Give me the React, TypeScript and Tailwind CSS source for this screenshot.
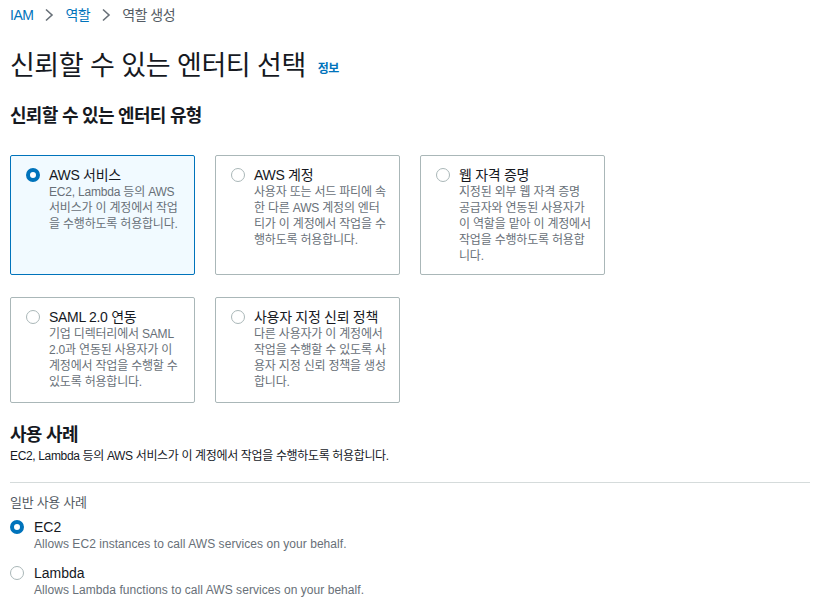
import React from "react";

const FONT = { fontFamily: '"Liberation Sans", "Noto Sans CJK KR", sans-serif' };

function Radio({ checked }: { checked?: boolean }) {
  return checked ? (
    <span className="block w-[14px] h-[14px] rounded-full border-[4px] border-[#0073bb] bg-white shrink-0" />
  ) : (
    <span className="block w-[14px] h-[14px] rounded-full border border-[#aab7b8] bg-white shrink-0" />
  );
}

type CardProps = { title: string; lines: string[]; checked?: boolean };

function Card({ title, lines, checked }: CardProps) {
  return (
    <div
      className={
        "rounded-[2px] border pt-[10px] pl-[15px] pr-[10px] flex gap-[9px] " +
        (checked ? "border-[#0073bb] bg-[#f1faff]" : "border-[#aab7b8] bg-white")
      }
    >
      <div className="h-[18px] flex items-center">
        <Radio checked={checked} />
      </div>
      <div className="flex flex-col">
        <div className="text-[14px] leading-[18px] text-[#16191f] whitespace-nowrap tracking-[-0.3px]">{title}</div>
        {lines.map((l, i) => (
          <div key={i} className="text-[12px] leading-[16px] text-[#687078] whitespace-nowrap tracking-[-0.2px]">
            {l}
          </div>
        ))}
      </div>
    </div>
  );
}

function Chevron() {
  return (
    <svg width="10" height="14" viewBox="0 0 10 14" className="mx-[11px]">
      <path d="M2 1.5 L8 7 L2 12.5" fill="none" stroke="#687078" strokeWidth="1.6" />
    </svg>
  );
}

export default function App() {
  return (
    <div className="w-[818px] h-[605px] overflow-hidden bg-white pl-[10px]" style={FONT}>
      <div className="h-[30px] flex items-center text-[14px] tracking-[-0.5px]">
        <span className="text-[#0073bb]">IAM</span>
        <Chevron />
        <span className="text-[#0073bb]">역할</span>
        <Chevron />
        <span className="text-[#545b64]">역할 생성</span>
      </div>

      <div className="mt-[16px] h-[40px] flex items-center">
        <h1 className="text-[27px] leading-[40px] text-[#16191f] tracking-[-0.5px]">신뢰할 수 있는 엔터티 선택</h1>
        <span className="ml-[12px] mt-[6px] text-[12px] font-bold text-[#0073bb] tracking-[-0.5px]">정보</span>
      </div>

      <h2 className="mt-[18px] text-[18px] leading-[24px] font-bold text-[#16191f] tracking-[-0.7px]">
        신뢰할 수 있는 엔터티 유형
      </h2>

      <div className="mt-[27px] grid grid-cols-[185px_185px_185px] grid-rows-[120px_106px] gap-x-[20px] gap-y-[22px]">
        <Card
          checked
          title="AWS 서비스"
          lines={["EC2, Lambda 등의 AWS", "서비스가 이 계정에서 작업", "을 수행하도록 허용합니다."]}
        />
        <Card
          title="AWS 계정"
          lines={["사용자 또는 서드 파티에 속", "한 다른 AWS 계정의 엔터", "티가 이 계정에서 작업을 수", "행하도록 허용합니다."]}
        />
        <Card
          title="웹 자격 증명"
          lines={["지정된 외부 웹 자격 증명", "공급자와 연동된 사용자가", "이 역할을 맡아 이 계정에서", "작업을 수행하도록 허용합", "니다."]}
        />
        <Card
          title="SAML 2.0 연동"
          lines={["기업 디렉터리에서 SAML", "2.0과 연동된 사용자가 이", "계정에서 작업을 수행할 수", "있도록 허용합니다."]}
        />
        <Card
          title="사용자 지정 신뢰 정책"
          lines={["다른 사용자가 이 계정에서", "작업을 수행할 수 있도록 사", "용자 지정 신뢰 정책을 생성", "합니다."]}
        />
      </div>

      <h2 className="mt-[20px] text-[18px] leading-[24px] font-bold text-[#16191f] tracking-[-0.7px]">사용 사례</h2>
      <div className="mt-[1px] text-[12px] leading-[16px] text-[#16191f] tracking-[-0.35px]">
        EC2, Lambda 등의 AWS 서비스가 이 계정에서 작업을 수행하도록 허용합니다.
      </div>

      <div className="mt-[18px] w-[800px] h-[1px] bg-[#d5dbdb]" />

      <div className="mt-[10px] text-[13px] leading-[20px] text-[#545b64] tracking-[-0.3px]">일반 사용 사례</div>

      <div className="mt-[5px] flex gap-[10px]">
        <div className="h-[18px] flex items-center">
          <Radio checked />
        </div>
        <div>
          <div className="text-[14px] leading-[18px] text-[#16191f]">EC2</div>
          <div className="text-[12px] leading-[16px] text-[#687078] tracking-[0.05px]">Allows EC2 instances to call AWS services on your behalf.</div>
        </div>
      </div>

      <div className="mt-[12px] flex gap-[10px]">
        <div className="h-[18px] flex items-center">
          <Radio />
        </div>
        <div>
          <div className="text-[14px] leading-[18px] text-[#16191f]">Lambda</div>
          <div className="text-[12px] leading-[16px] text-[#687078] tracking-[0.05px]">Allows Lambda functions to call AWS services on your behalf.</div>
        </div>
      </div>
    </div>
  );
}
